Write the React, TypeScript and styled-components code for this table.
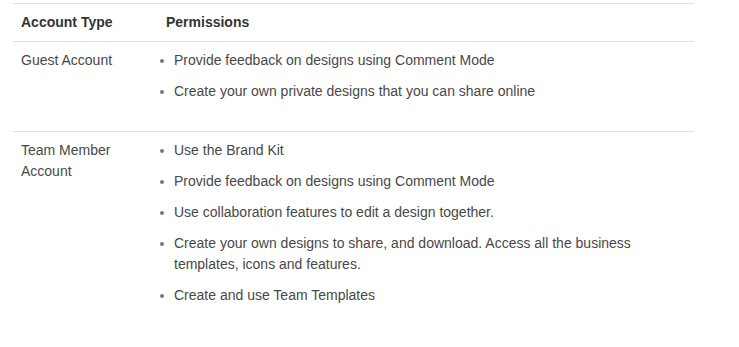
import React from 'react'
import styled, { createGlobalStyle } from 'styled-components'

const GlobalStyle = createGlobalStyle`
    body {
        margin: 0;
        background: #fff;
        font-family: "Liberation Sans", Arial, Helvetica, sans-serif;
    }
`

interface AccountRow {
    type: string[],
    permissions: string[],
}

const rows: AccountRow[] = [
    {
        type: ['Guest Account'],
        permissions: [
            'Provide feedback on designs using Comment Mode',
            'Create your own private designs that you can share online',
        ],
    },
    {
        type: ['Team Member', 'Account'],
        permissions: [
            'Use the Brand Kit',
            'Provide feedback on designs using Comment Mode',
            'Use collaboration features to edit a design together.',
            'Create your own designs to share, and download. Access all the business templates, icons and features.',
            'Create and use Team Templates',
        ],
    },
]

const Page = styled.div`
    padding: 3px 0 0 13px;
`

const Table = styled.table`
    width: 681px;
    border-collapse: collapse;
    font-size: 14px;
    line-height: 21px;
    color: #484848;
`

const HeadCell = styled.th`
    text-align: left;
    font-weight: bold;
    color: #333;
    padding: 8px 8px;
    border-top: 1px solid #e2e2e2;
    border-bottom: 1px solid #e2e2e2;
`

const Cell = styled.td<{ $first?: boolean }>`
    vertical-align: top;
    padding: 8px 8px;
    width: ${props => props.$first ? '129px' : 'auto'};
`

const Row = styled.tr<{ $last?: boolean }>`
    border-bottom: ${props => props.$last ? 'none' : '1px solid #e2e2e2'};
`

const List = styled.ul`
    margin: 0 0 21px 0;
    padding-left: 8px;
    list-style: none;
`

const Item = styled.li`
    position: relative;
    & + & {
        margin-top: 10px;
    }
    &::before {
        content: '';
        position: absolute;
        left: -14px;
        top: 9px;
        width: 4px;
        height: 4px;
        border-radius: 50%;
        background: #777;
    }
`

export default function App() {
    return (
        <>
            <GlobalStyle />
            <Page>
                <Table>
                    <thead>
                        <tr>
                            <HeadCell>Account Type</HeadCell>
                            <HeadCell>Permissions</HeadCell>
                        </tr>
                    </thead>
                    <tbody>
                        {rows.map((row, i) => (
                            <Row key={i} $last={i === rows.length - 1}>
                                <Cell $first>
                                    {row.type.map((t, j) => <div key={j}>{t}</div>)}
                                </Cell>
                                <Cell>
                                    <List>
                                        {row.permissions.map((p, j) => <Item key={j}>{p}</Item>)}
                                    </List>
                                </Cell>
                            </Row>
                        ))}
                    </tbody>
                </Table>
            </Page>
        </>
    )
}
